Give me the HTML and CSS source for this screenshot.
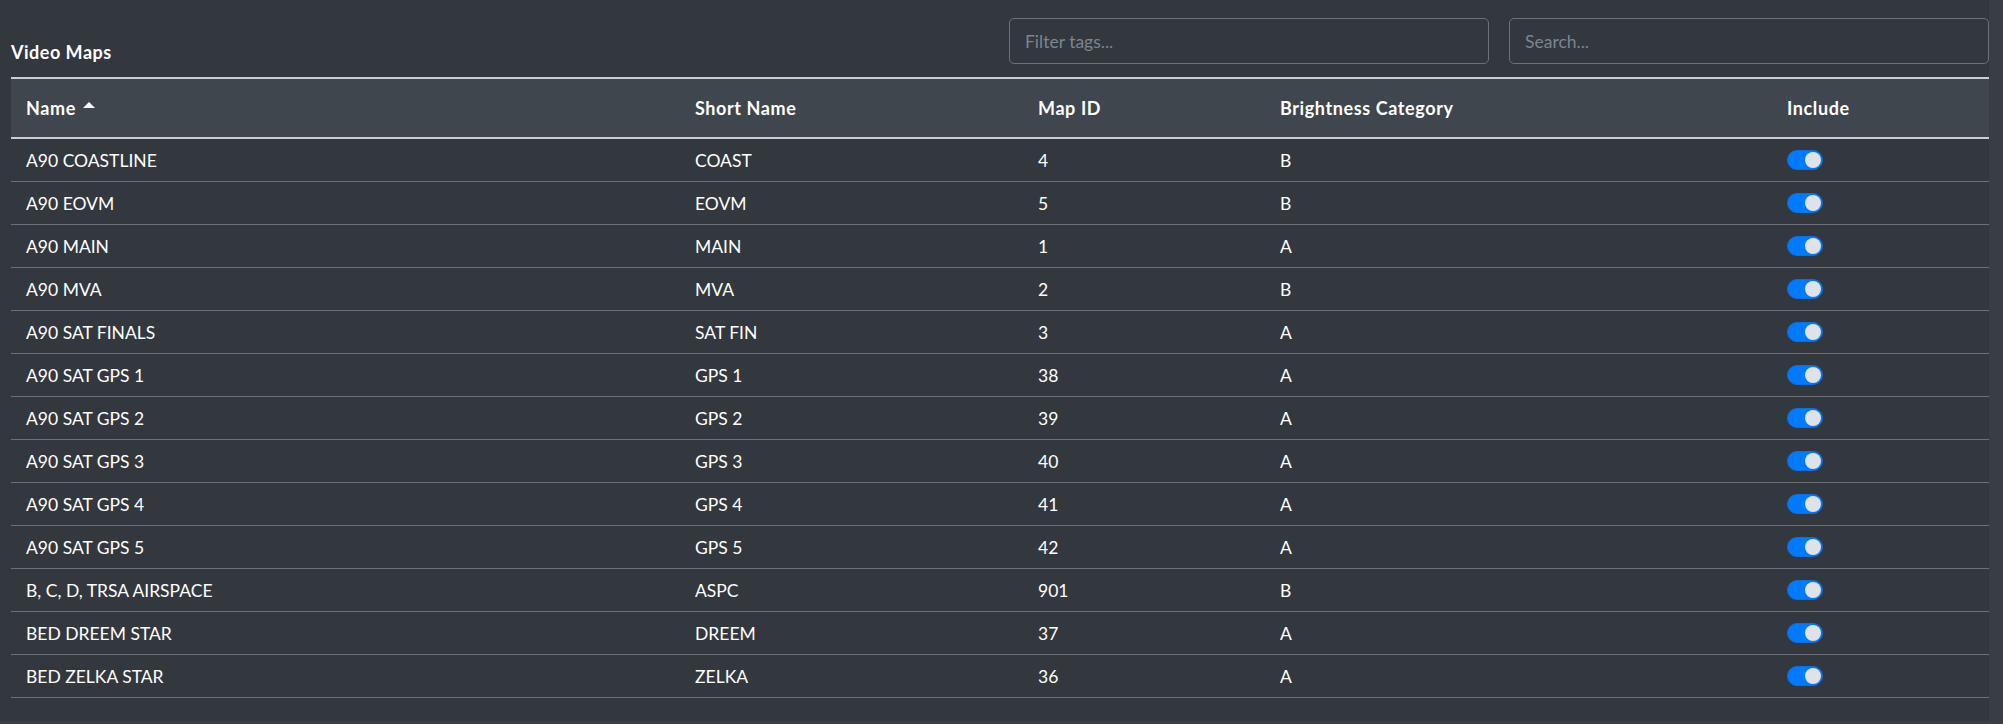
FILE: index.html
```html
<!DOCTYPE html>
<html lang="en">
  <head>
    <meta charset="UTF-8" />
    <meta name="viewport" content="width=device-width, initial-scale=1.0" />
    <title>Video Maps</title>
    <link rel="stylesheet" href="styles.css">
  </head>

  <body>
    <div class="panel">
      <div class="toolbar">
        <h2 class="title">Video Maps</h2>
        <div class="filters">
          <input class="field" type="text" placeholder="Filter tags..." />
          <input class="field" type="text" placeholder="Search..." />
        </div>
      </div>

      <table class="maps">
        <colgroup>
          <col class="col-name" />
          <col class="col-short" />
          <col class="col-id" />
          <col class="col-bright" />
          <col class="col-include" />
        </colgroup>
        <thead>
          <tr>
            <th>Name <span class="caret"></span></th>
            <th>Short Name</th>
            <th>Map ID</th>
            <th>Brightness Category</th>
            <th>Include</th>
          </tr>
        </thead>
        <tbody>
          <tr><td>A90 COASTLINE</td><td>COAST</td><td>4</td><td>B</td><td><span class="switch"></span></td></tr>
          <tr><td>A90 EOVM</td><td>EOVM</td><td>5</td><td>B</td><td><span class="switch"></span></td></tr>
          <tr><td>A90 MAIN</td><td>MAIN</td><td>1</td><td>A</td><td><span class="switch"></span></td></tr>
          <tr><td>A90 MVA</td><td>MVA</td><td>2</td><td>B</td><td><span class="switch"></span></td></tr>
          <tr><td>A90 SAT FINALS</td><td>SAT FIN</td><td>3</td><td>A</td><td><span class="switch"></span></td></tr>
          <tr><td>A90 SAT GPS 1</td><td>GPS 1</td><td>38</td><td>A</td><td><span class="switch"></span></td></tr>
          <tr><td>A90 SAT GPS 2</td><td>GPS 2</td><td>39</td><td>A</td><td><span class="switch"></span></td></tr>
          <tr><td>A90 SAT GPS 3</td><td>GPS 3</td><td>40</td><td>A</td><td><span class="switch"></span></td></tr>
          <tr><td>A90 SAT GPS 4</td><td>GPS 4</td><td>41</td><td>A</td><td><span class="switch"></span></td></tr>
          <tr><td>A90 SAT GPS 5</td><td>GPS 5</td><td>42</td><td>A</td><td><span class="switch"></span></td></tr>
          <tr><td>B, C, D, TRSA AIRSPACE</td><td>ASPC</td><td>901</td><td>B</td><td><span class="switch"></span></td></tr>
          <tr><td>BED DREEM STAR</td><td>DREEM</td><td>37</td><td>A</td><td><span class="switch"></span></td></tr>
          <tr><td>BED ZELKA STAR</td><td>ZELKA</td><td>36</td><td>A</td><td><span class="switch"></span></td></tr>
        </tbody>
      </table>
    </div>
  </body>
</html>
```

FILE: styles.css
```css
* {
  box-sizing: border-box;
  margin: 0;
  padding: 0;
}

body {
  font-family: Lato, "Liberation Sans", sans-serif;
  font-size: 17.5px;
  color: #fff;
  background-color: #393d44;
  height: 100vh;
  overflow: hidden;
}

.panel {
  width: 1989px;
  height: 721px;
  padding: 18px 0 0 11px;
  background-color: #33373e;
}

.toolbar {
  display: flex;
  justify-content: space-between;
  align-items: flex-end;
}

.title {
  font-size: 18px;
  font-weight: 700;
  letter-spacing: 0.5px;
  padding-bottom: 1px;
}

.filters {
  display: flex;
  gap: 20px;
}

.field {
  width: 480px;
  height: 46px;
  padding: 0 15px;
  font-family: inherit;
  font-size: 17.5px;
  color: #fff;
  background-color: transparent;
  border: 1px solid #6b727c;
  border-radius: 5px;
  outline: none;
}

.field::placeholder {
  color: #7c8590;
}

.maps {
  width: 1978px;
  margin-top: 13px;
  border-collapse: collapse;
  table-layout: fixed;
}

.col-name {
  width: 669px;
}

.col-short {
  width: 343px;
}

.col-id {
  width: 242px;
}

.col-bright {
  width: 507px;
}

.col-include {
  width: 217px;
}

.maps th {
  height: 60px;
  padding: 0 15px;
  text-align: left;
  font-size: 18px;
  font-weight: 700;
  letter-spacing: 0.6px;
  background-color: #40464e;
  border-top: 2px solid #c9ced4;
  border-bottom: 2px solid #c9ced4;
}

.maps td {
  height: 43px;
  padding: 2px 15px 0;
  border-bottom: 1px solid #6c7178;
}

/* sort indicator next to the active column */
.caret {
  display: inline-block;
  width: 0;
  height: 0;
  margin-left: 2px;
  vertical-align: 7px;
  border-left: 6px solid transparent;
  border-right: 6px solid transparent;
  border-bottom: 6px solid #fff;
}

.switch {
  position: relative;
  display: block;
  width: 36px;
  height: 20px;
  margin-top: -2px;
  border-radius: 10px;
  background-color: #007bff;
  border: 1px solid #0a6fe0;
}

.switch::after {
  content: "";
  position: absolute;
  top: 1px;
  right: 1px;
  width: 16px;
  height: 16px;
  border-radius: 50%;
  background-color: #dfe2e6;
}
```
